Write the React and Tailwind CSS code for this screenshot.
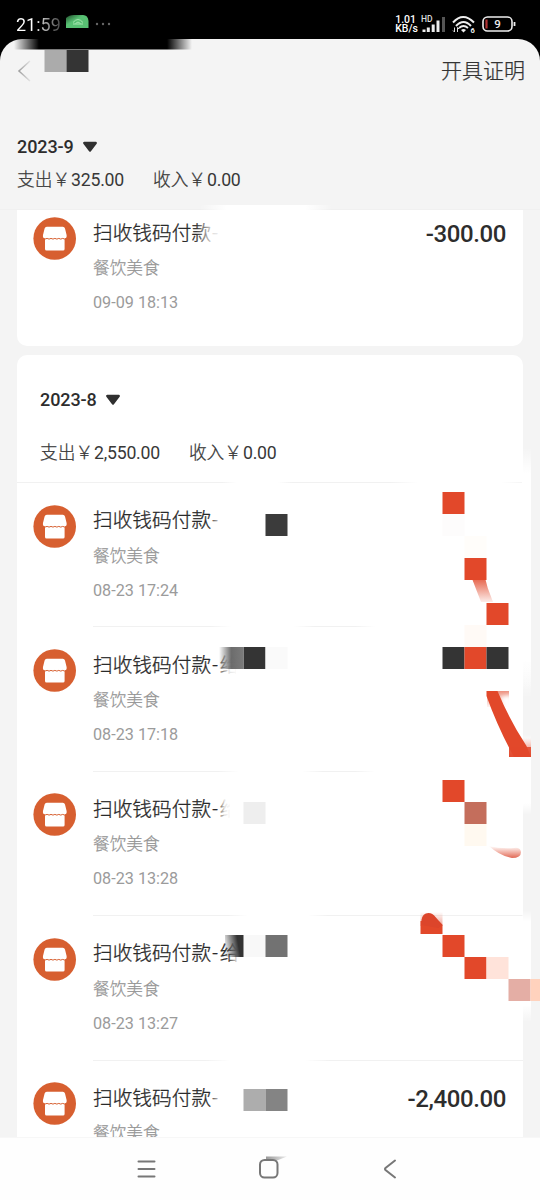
const records = [
  { time: "08-23 17:24", suffix: "-" },
  { time: "08-23 17:18", suffix: "-给" },
  { time: "08-23 13:28", suffix: "-给" },
  { time: "08-23 13:27", suffix: "-给" },
  { suffix: "-", amount: "-2,400.00" },
];

const StoreIcon = () => (
  <svg className="w-[43px] h-[43px] shrink-0" viewBox="0 0 43 43">
    <circle cx="21.7" cy="21.5" r="21.3" fill="#d75f30" />
    <rect x="12" y="19" width="19.600" height="14.500" rx="1.600" fill="#fff" />
    <path
      d="M13.800 9.800h16q1.700 0 2.200 1.600l1.600 6.600q.6 3-2.200 3.700H12.200q-2.800-.7-2.200-3.700l1.600-6.600q.5-1.600 2.200-1.600z"
      fill="#fff"
    />
    <path
      d="M9.500 21.600q2.800.9 4.600-.2 2 1.400 3.900 0 2 1.400 3.900 0 2 1.400 3.900 0 2 1.400 3.900 0 1.500 1.100 4.300.2"
      fill="none"
      stroke="#d75f30"
      strokeWidth="1"
    />
  </svg>
);

const MonthTitle = ({ month }) => (
  <div className="flex items-center text-[18px] leading-6 font-medium text-[#2d2d2d]">
    <span className="tracking-[-0.100px]">{month}</span>
    <svg className="ml-[8px] w-[16px] h-[12px]" viewBox="0 0 16 12">
      <path d="M2.300 2h11.400L8 9.500z" fill="#303030" stroke="#303030" strokeWidth="2.400" strokeLinejoin="round" />
    </svg>
  </div>
);

const Totals = ({ out, income }) => (
  <div className="flex items-center text-[17.700px] leading-6 text-[#383838]">
    <span className="font-light [-webkit-text-stroke:0.25px]">支出￥</span>
    <span className="ml-px tracking-[-0.250px]">{out}</span>
    <span className="ml-[29px] font-light [-webkit-text-stroke:0.25px]">收入￥</span>
    <span className="ml-px tracking-[-0.250px]">{income}</span>
  </div>
);

const Record = ({ time, suffix, amount }) => (
  <div className="flex pl-[16px] pr-[17px]">
    <StoreIcon />
    <div className="ml-[17px] flex-1">
      <p className="mt-[2.500px] text-[19.700px] leading-7 font-light text-[#2a2a2a] whitespace-nowrap [-webkit-text-stroke:0.3px]">
        扫收钱码付款<span className="ml-px tracking-[2px]">{suffix}</span>
      </p>
      <p className="mt-[9.500px] text-[16.700px] leading-6 font-light text-[#959595] [-webkit-text-stroke:0.25px]">
        餐饮美食
      </p>
      <p className="mt-[10px] text-[16.200px] leading-6 text-[#9b9b9b]">{time}</p>
    </div>
    <p className="mt-[2.500px] text-[24px] leading-7 font-medium tracking-[-0.400px] text-[#2d2d2d]">
      {amount}
    </p>
  </div>
);

const StatusBar = () => (
  <div className="h-[39px] shrink-0 bg-black text-white flex items-center pl-4 pr-[24px] pt-[9px]">
    <span className="text-[18px] bg-gradient-to-r from-white from-40% to-[#444] bg-clip-text text-transparent">
      21:59
    </span>
    <svg className="ml-[5px] -mt-[8px] w-[23px] h-[17px]" viewBox="0 0 23 17">
      <defs>
        <linearGradient id="app" x1="0" y1="0" x2="1" y2="1">
          <stop offset="0" stopColor="#1d4d2a" />
          <stop offset="0.4" stopColor="#58c073" />
        </linearGradient>
      </defs>
      <path d="M0 16V6Q3 3 8 3H17Q22 3 22.500 9V16z" fill="url(#app)" />
      <path d="M7 10.500q5-6 10 0M9.500 11.500q2.500-3 5 0M7 12h10" fill="none" stroke="#a5e5af" />
    </svg>
    <svg className="ml-[6px] w-[16px] h-[4px]" viewBox="0 0 16 4">
      <circle cx="2" cy="2" r="1.200" fill="#666" />
      <circle cx="8" cy="2" r="1.200" fill="#666" />
      <circle cx="14" cy="2" r="1.200" fill="#666" />
    </svg>
    <div className="ml-auto text-[10.500px] leading-[9.500px] font-medium">
      <p>1.01</p>
      <p>KB/s</p>
    </div>
    <svg className="ml-[3px] w-[25px] h-[18px]" viewBox="0 0 25 18">
      <text x="0" y="7" fontSize="8.500" fontWeight="500" fill="#ddd">HD</text>
      <path d="M3 17v-2.500M7.300 17v-4.500M12.200 17V9.500M17 17V5.500" stroke="#eee" strokeWidth="3" />
      <path d="M22.500 17V2" stroke="#555" strokeWidth="3" />
    </svg>
    <svg className="ml-[6px] w-[23px] h-[18px]" viewBox="0 0 23 18">
      <g fill="none" stroke="#eee" strokeWidth="2">
        <path d="M1 7.500q10-11 21 0M4 11q7.500-8 15 0" />
      </g>
      <path d="M7 13q4.500-4 9 0" fill="none" stroke="#eee" strokeWidth="1.800" />
      <path d="M9 15q2.500-2 5 0l-2.500 2.500z" fill="#eee" />
      <path d="M2.500 12.500V17M5.500 17v-4.500M1 15.500l1.500 1.500M5.500 12.500L7 14" stroke="#ddd" />
      <text x="18.500" y="17.500" fontSize="7.500" fontWeight="700" fill="#eee">6</text>
    </svg>
    <svg className="ml-[7px] w-[34px] h-[16px]" viewBox="0 0 34 16">
      <rect x="1" y="1" width="29" height="14" rx="4.500" fill="none" stroke="#eee" strokeWidth="1.600" />
      <path d="M32.500 6v4" stroke="#eee" strokeWidth="1.800" />
      <path d="M4.500 3.500v9" stroke="#b03232" strokeWidth="2.200" />
      <text x="15.500" y="12" fontSize="11.500" fontWeight="500" fill="#eee" textAnchor="middle">9</text>
    </svg>
  </div>
);

// Redaction tiles and brush strokes lying over the list
const tiles = [
  [44, 50, "#ababab"], [66, 50, "#343434"],
  [265, 514, "#3b3b3b"], [442, 492, "#e2482a"], [464, 558, "#e2482a"], [486, 603, "#e2482a"],
  [464, 536, "#fffdfa"], [464, 625, "#fffaf6"], [442, 514, "#fdfcfc"],
  [243, 647, "#343434"], [265, 647, "#fafafa"],
  [442, 647, "#343434"], [464, 647, "#e2482a"], [486, 647, "#343434"],
  [243, 802, "#eeeeee"], [442, 780, "#e2482a"], [464, 802, "#c46e5c"], [464, 824, "#fff9f0"],
  [243, 935, "#f8f8f8"], [265, 935, "#727272"],
  [442, 935, "#e2482a"], [464, 957, "#e2482a"], [486, 957, "#ffe3da"],
  [508, 979, "#e4aea5"], [530, 979, "#ffd2bd"],
  [243, 1089, "#adadad"], [265, 1089, "#848484"],
];

const Redactions = () => (
  <svg className="absolute inset-0 w-[540px] h-[1200px] pointer-events-none" viewBox="0 0 540 1200">
    <defs>
      <filter id="soft" x="-20%" y="-20%" width="140%" height="140%">
        <feGaussianBlur stdDeviation="2" />
      </filter>
      <linearGradient id="top">
        <stop offset="0" stopColor="#000" stopOpacity="0" />
        <stop offset="0.14" stopColor="#000" />
        <stop offset="0.86" stopColor="#000" />
        <stop offset="1" stopColor="#000" stopOpacity="0" />
      </linearGradient>
      <linearGradient id="white">
        <stop offset="0" stopColor="#fff" stopOpacity="0" />
        <stop offset="0.2" stopColor="#fff" />
        <stop offset="0.8" stopColor="#fff" />
        <stop offset="1" stopColor="#fff" stopOpacity="0" />
      </linearGradient>
      <linearGradient id="patch" x1="0" y1="0" x2="0" y2="1">
        <stop offset="0" stopColor="#fff" stopOpacity="0" />
        <stop offset="0.1" stopColor="#fff" />
        <stop offset="0.85" stopColor="#fff" />
        <stop offset="1" stopColor="#fff" stopOpacity="0" />
      </linearGradient>
      <linearGradient id="patchDown" x1="0" y1="0" x2="0" y2="1">
        <stop offset="0.2" stopColor="#fff" />
        <stop offset="1" stopColor="#fff" stopOpacity="0" />
      </linearGradient>
      <linearGradient id="erase">
        <stop offset="0" stopColor="#fff" stopOpacity="0" />
        <stop offset="0.5" stopColor="#fff" stopOpacity="0.85" />
        <stop offset="1" stopColor="#fff" />
      </linearGradient>
      <linearGradient id="grey">
        <stop offset="0" stopColor="#555" stopOpacity="0" />
        <stop offset="0.5" stopColor="#5c5c5c" />
        <stop offset="1" stopColor="#6c6c6c" />
      </linearGradient>
      <linearGradient id="dark" x1="0" y1="1" x2="1" y2="0.8">
        <stop offset="0" stopColor="#333" stopOpacity="0" />
        <stop offset="0.8" stopColor="#333" />
      </linearGradient>
      <linearGradient id="fadeDown" x1="0" y1="0" x2="0" y2="1">
        <stop offset="0" stopColor="#e2482a" />
        <stop offset="1" stopColor="#e2482a" stopOpacity="0.1" />
      </linearGradient>
      <linearGradient id="fadeUp" x1="0" y1="0" x2="0" y2="1">
        <stop offset="0" stopColor="#e2482a" stopOpacity="0" />
        <stop offset="1" stopColor="#d9432b" stopOpacity="0.8" />
      </linearGradient>
      <linearGradient id="back">
        <stop offset="0" stopColor="#f4f4f4" stopOpacity="0" />
        <stop offset="1" stopColor="#f4f4f4" />
      </linearGradient>
    </defs>

    <rect x="14" y="38" width="178" height="11.500" fill="url(#top)" />
    <rect x="18" y="56" width="15" height="30" fill="url(#back)" />
    <rect x="200" y="205" width="132" height="8" fill="url(#white)" />

    {/* wiped merchant names */}
    <rect x="196" y="217" width="34" height="36" fill="url(#erase)" />
    <rect x="210" y="505" width="20" height="32" fill="url(#erase)" />
    <rect x="218" y="649" width="20" height="32" fill="url(#erase)" />
    <rect x="236" y="649" width="10" height="32" fill="#fff" />
    <rect x="218" y="794" width="13" height="32" fill="url(#erase)" />
    <rect x="230" y="794" width="14" height="32" fill="#fff" />
    <rect x="228" y="938" width="18" height="32" fill="url(#erase)" />
    <rect x="210" y="1082" width="20" height="32" fill="url(#erase)" />

    {/* wiped dividers */}
    <rect x="222" y="480" width="70" height="6" fill="url(#white)" />
    <rect x="390" y="480" width="140" height="6" fill="url(#white)" />
    <rect x="210" y="624" width="105" height="6" fill="url(#white)" />
    <rect x="355" y="624" width="100" height="6" fill="url(#white)" />
    <rect x="400" y="624" width="123" height="6" fill="#fff" />
    <rect x="218" y="768" width="105" height="6" fill="url(#white)" />
    <rect x="355" y="768" width="100" height="6" fill="url(#white)" />
    <rect x="400" y="768" width="123" height="6" fill="#fff" />
    <rect x="228" y="913" width="100" height="6" fill="url(#white)" />
    <rect x="205" y="1057" width="125" height="6" fill="url(#white)" />

    {/* wiped right margin */}
    <rect x="522" y="448" width="9" height="250" fill="url(#patch)" />
    <rect x="522" y="575" width="9" height="118" fill="url(#patchDown)" />
    <rect x="522" y="735" width="9" height="80" fill="url(#patch)" />
    <rect x="522" y="910" width="9" height="112" fill="url(#patch)" />

    {tiles.map(([x, y, color]) => (
      <rect key={`${x}-${y}`} x={x + 0.5} y={y} width="22" height="22" fill={color} />
    ))}
    <rect x="219" y="647" width="24.500" height="22" fill="url(#grey)" opacity="0.9" />
    <rect x="225" y="935" width="18.500" height="22" fill="url(#dark)" />
    <path d="M471 576l13-2q3 14 9 28h-12z" fill="url(#fadeDown)" />
    <rect x="487" y="691" width="22" height="16" fill="url(#fadeDown)" opacity="0.6" />
    <path d="M500 697l8 20h4v-22z" fill="#fff" filter="url(#soft)" />
    <rect x="509" y="738" width="22" height="19" fill="url(#fadeUp)" />
    <path d="M486.500 691h11q12 29 29 55l4.500 11H514Q498 728 486.500 696z" fill="#e2482a" />
    <path d="M509 747h22v10h-22z" fill="#e2482a" opacity="0.85" />
    <path d="M489 846q12 3 25 2 6-1 7 4 0 6-9 6-12-2-23-12z" fill="url(#fadeUp)" />
    <rect x="420.500" y="912" width="22" height="14" fill="url(#fadeUp)" opacity="0.6" />
    <path d="M420.500 934v-13h18l4 4v9z" fill="#e2482a" />
    <path d="M421.500 925v-5q1-7 7-7 4 0 7 4l7 8-4 3z" fill="#dc452b" />
  </svg>
);

const App = () => {
  return (
    <div className="relative w-[540px] h-[1200px] overflow-hidden flex flex-col bg-black font-[Roboto,'Noto_Sans_CJK_SC',sans-serif]">
      <StatusBar />

      <div className="flex-1 min-h-0 flex flex-col overflow-hidden rounded-t-[22px] bg-[#f4f4f4]">
        {/* Header */}
        <div className="h-[171px] shrink-0 border-b border-[#f0f0f0]">
          <div className="flex items-center justify-between pt-[16px] pl-[17px] pr-[15px]">
            <svg className="w-[14px] h-[24px]" viewBox="0 0 14 24">
              <path d="M13 2L2 12l11 10" fill="none" stroke="#999" strokeWidth="1.500" />
            </svg>
            <span className="text-[21px] leading-8 font-light text-[#333] [-webkit-text-stroke:0.25px]">开具证明</span>
          </div>
          <div className="mt-[47.500px] pl-[17px]">
            <MonthTitle month="2023-9" />
            <div className="mt-[9px]">
              <Totals out="325.00" income="0.00" />
            </div>
          </div>
        </div>

        {/* September */}
        <div className="mx-[17px] h-[136px] shrink-0 rounded-b-[10px] bg-white pt-[7px]">
          <Record time="09-09 18:13" suffix="-" amount="-300.00" />
        </div>

        {/* August */}
        <div className="mx-[17px] mt-[9px] flex-1 min-h-0 overflow-hidden rounded-t-[10px] bg-white">
          <div className="h-[127px] pl-[23px] pt-[33px]">
            <MonthTitle month="2023-8" />
            <div className="mt-[29px]">
              <Totals out="2,550.00" income="0.00" />
            </div>
          </div>
          {records.map((r, i) => (
            <div key={i} className="h-[144.400px]">
              <div className={i === 0 ? "h-px bg-[#f1f1f1]" : "h-px ml-[76px] bg-[#f1f1f1]"} />
              <div className="pt-[21.700px]">
                <Record {...r} />
              </div>
            </div>
          ))}
        </div>
      </div>

      {/* System navigation */}
      <div className="h-[63px] shrink-0 bg-[#fefefe] border-t border-[#f7f7f7] flex items-center pl-[137px]">
        <svg className="w-[19px] h-[18px]" viewBox="0 0 19 18">
          <path d="M1.500 1.500h16M1.500 9h16M1.500 16.500h16" stroke="#777" strokeWidth="2" strokeLinecap="round" />
        </svg>
        <svg className="ml-[102px] w-[29px] h-[26px]" viewBox="0 0 29 26">
          <defs>
            <linearGradient id="smear">
              <stop offset="0" stopColor="#999" />
              <stop offset="1" stopColor="#999" stopOpacity="0.2" />
            </linearGradient>
          </defs>
          <path d="M8 0.500h21l-10 4H8z" fill="url(#smear)" />
          <rect x="2" y="4" width="17.500" height="17.500" rx="4.500" fill="none" stroke="#777" strokeWidth="2" />
        </svg>
        <svg className="ml-[96px] w-[14px] h-[20px]" viewBox="0 0 14 20">
          <path d="M12 1.500L2.500 9q-1 1 0 2L12 18.500" fill="none" stroke="#777" strokeWidth="2" strokeLinecap="round" />
        </svg>
      </div>

      <Redactions />
    </div>
  );
};

export default App;
